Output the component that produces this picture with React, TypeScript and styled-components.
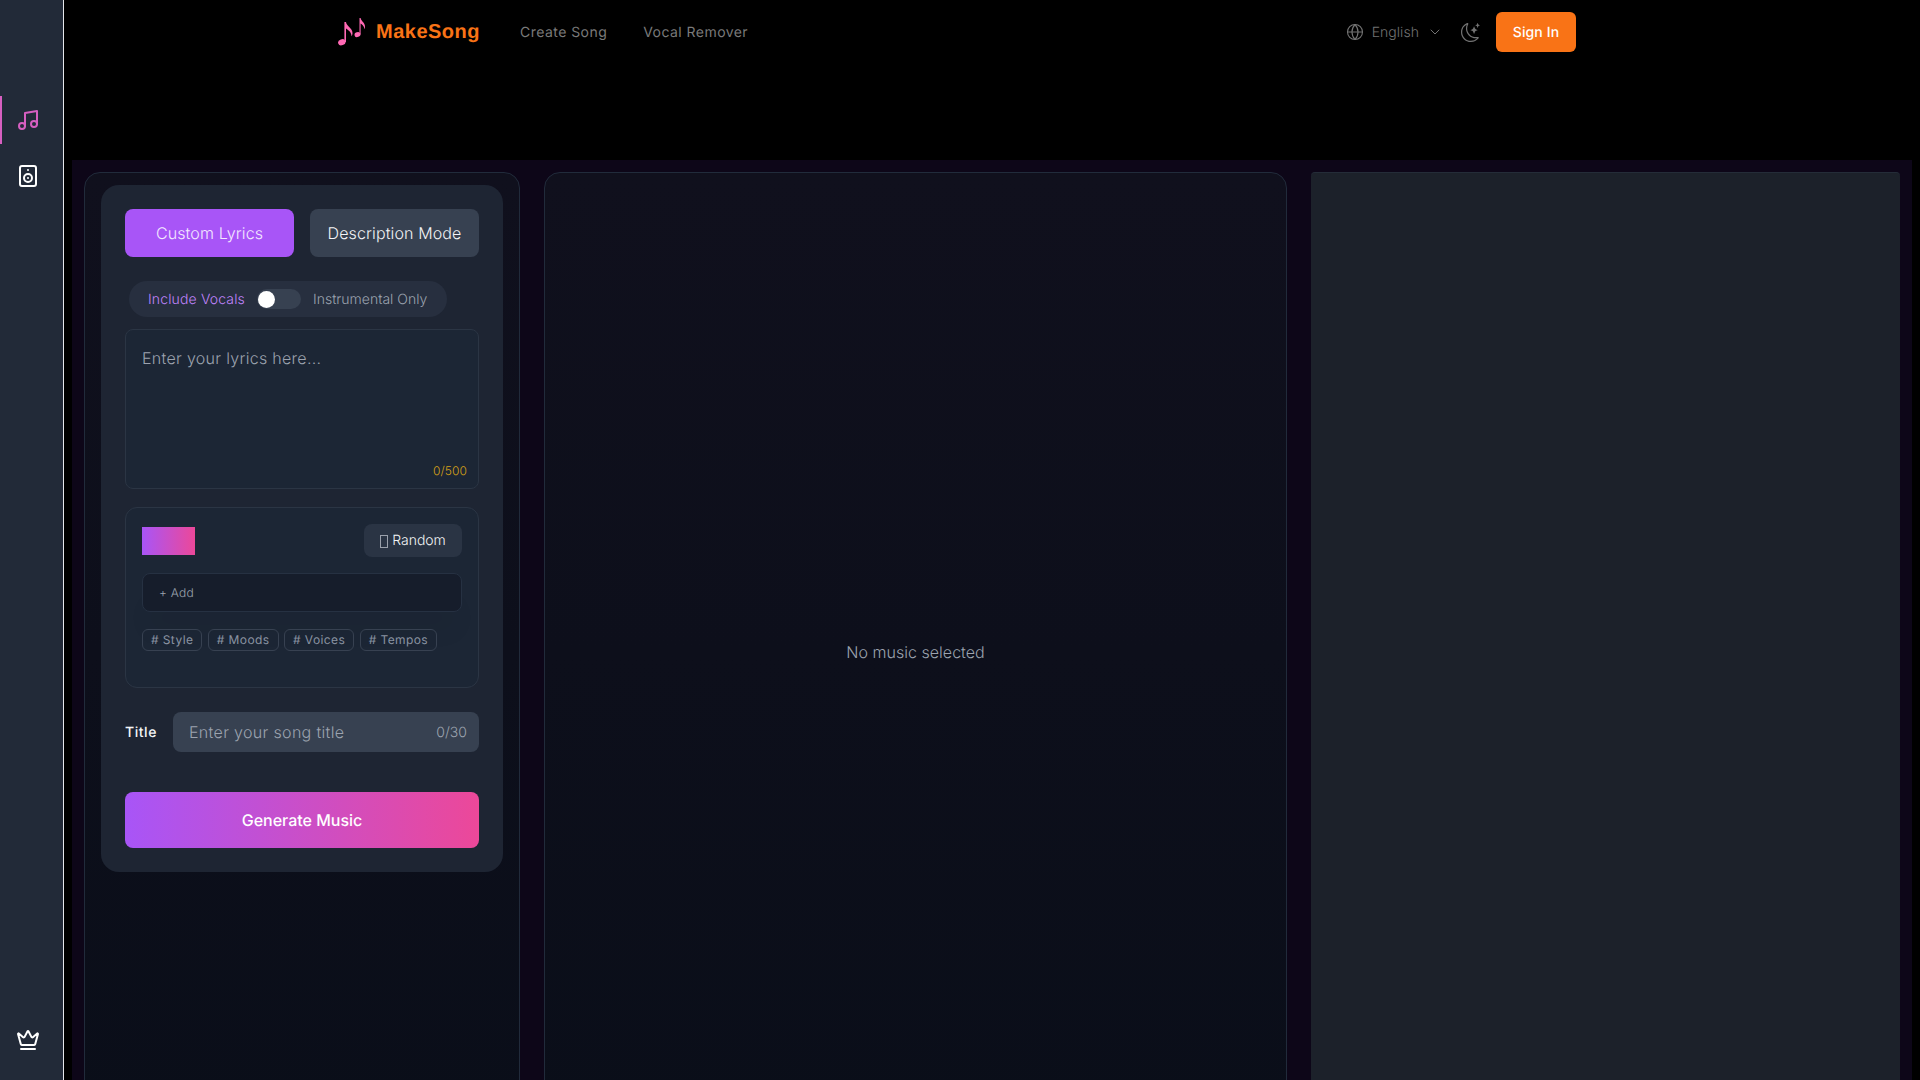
import React from "react";
import styled, { createGlobalStyle } from "styled-components";
import { Music, Speaker, Crown, Globe, ChevronDown } from "lucide-react";
import { BsMoonStars } from "react-icons/bs";

const Global = createGlobalStyle`
  * { box-sizing: border-box; }
  html, body { margin: 0; height: 100%; background: #000; overflow: hidden; }
  body { font-family: Inter, "Liberation Sans", sans-serif; color: #fff; text-rendering: geometricPrecision; }
  ::placeholder { color: #9ca3af; opacity: 1; }
`;

const Shell = styled.div`
  display: flex;
  width: 1920px;
  height: 1080px;
  overflow: hidden;
  background: #000;
`;

const Sidebar = styled.aside`
  flex: none;
  width: 64px;
  height: 1080px;
  background: #222a38;
  border-right: 1px solid #e5e7eb;
  display: flex;
  flex-direction: column;
  padding: 96px 0 8px;
`;

const SideItem = styled.div<{ $active?: boolean }>`
  position: relative;
  height: 48px;
  display: flex;
  align-items: center;
  padding-left: 16px;
  color: ${(p) => (p.$active ? "#d65fc0" : "#fff")};
  margin-bottom: 8px;
  &::before {
    content: "";
    display: ${(p) => (p.$active ? "block" : "none")};
    position: absolute;
    left: 0;
    top: 0;
    bottom: 0;
    width: 2px;
    background: #d65fc0;
  }
`;

const SideSpacer = styled.div`
  flex: 1;
`;

const Content = styled.div`
  flex: 1;
  min-width: 0;
  display: flex;
  flex-direction: column;
`;

const Header = styled.header`
  flex: none;
  height: 160px;
  padding: 12px 0 0 274px;
  width: 1512px;
`;

const HeaderRow = styled.div`
  display: flex;
  align-items: center;
  height: 40px;
`;

const Brand = styled.div`
  display: flex;
  align-items: center;
  gap: 10px;
  margin-right: 40px;
`;

const BrandName = styled.span`
  font-family: "Liberation Sans", Arial, sans-serif;
  font-weight: 700;
  font-size: 20px;
  letter-spacing: 0.5px;
  color: #f97316;
`;

const NavLink = styled.a`
  font-size: 14px;
  font-weight: 400;
  letter-spacing: 0.45px;
  color: #7a7a7a;
  margin-right: 36px;
`;

const HeaderTools = styled.div`
  margin-left: auto;
  display: flex;
  align-items: center;
  color: #737373;
`;

const Lang = styled.div`
  display: flex;
  align-items: center;
  gap: 8px;
  font-size: 14px;
  font-weight: 350;
  letter-spacing: 0.05px;
  margin-right: 18px;
`;

const SignIn = styled.button`
  width: 80px;
  height: 40px;
  margin-left: 16px;
  border: 0;
  border-radius: 6px;
  background: #f97316;
  color: #fff;
  font: 450 14px Inter, sans-serif;
  letter-spacing: 0.1px;
  text-rendering: geometricPrecision;
`;

const Main = styled.main`
  flex: none;
  width: 1840px;
  margin-left: 8px;
  height: 1000px;
  padding: 12px;
  background: #0d0618;
  display: flex;
  gap: 24px;
`;

const Panel = styled.section<{ $w: number }>`
  flex: none;
  width: ${(p) => p.$w}px;
  height: 960px;
  border: 1px solid #212b3b;
  border-radius: 16px;
  background: linear-gradient(180deg, #10101d, #0a0e19);
`;

const LeftPanel = styled(Panel)`
  padding: 12px 16px;
`;

const MiddlePanel = styled(Panel)`
  display: flex;
  align-items: center;
  justify-content: center;
  color: #9ca3af;
  font-size: 16px;
  font-weight: 350;
  letter-spacing: 0.03px;
`;

const RightPanel = styled.section`
  flex: none;
  width: 589px;
  height: 960px;
  background: #1c212a;
  border-top: 1px solid #242c38;
  border-radius: 4px 4px 0 0;
`;

const Card = styled.div`
  width: 402px;
  height: 687px;
  padding: 24px;
  border-radius: 18px;
  background: #1e2533;
`;

const Tabs = styled.div`
  display: grid;
  grid-template-columns: 1fr 1fr;
  gap: 16px;
`;

const Tab = styled.button<{ $active?: boolean }>`
  height: 48px;
  border: 0;
  border-radius: 8px;
  background: ${(p) => (p.$active ? "#a855f7" : "#374151")};
  color: ${(p) => (p.$active ? "#f3e8ff" : "#f3f4f6")};
  font: 350 16px Inter, sans-serif;
  letter-spacing: 0.12px;
  text-rendering: geometricPrecision;
`;

const VocalPill = styled.div`
  display: inline-flex;
  align-items: center;
  height: 36px;
  margin: 24px 0 12px 4px;
  padding: 0 20px 0 19px;
  border-radius: 18px;
  background: #272f3f;
  font-size: 14px;
  font-weight: 350;
  color: #9ca3af;
  vertical-align: top;
`;

const VocalOn = styled.span`
  color: #c084fc;
  letter-spacing: 0.15px;
`;

const VocalOff = styled.span`
  letter-spacing: 0;
`;

const Toggle = styled.span`
  position: relative;
  width: 44px;
  height: 20px;
  margin: 0 12px;
  border-radius: 10px;
  background: #374151;
`;

const Knob = styled.span`
  position: absolute;
  left: 1px;
  top: 1.5px;
  width: 17px;
  height: 17px;
  border-radius: 50%;
  background: #fff;
`;

const LyricsBox = styled.div`
  position: relative;
  height: 160px;
  border: 1px solid #2b3544;
  border-radius: 8px;
  background: #1c2635;
`;

const Lyrics = styled.textarea`
  display: block;
  width: 100%;
  height: 100%;
  padding: 16px;
  border: 0;
  resize: none;
  background: transparent;
  font: 350 16px/24px Inter, sans-serif;
  letter-spacing: 0.3px;
  color: #fff;
  outline: none;
  text-rendering: geometricPrecision;
`;

const LyricsCount = styled.span`
  position: absolute;
  right: 11px;
  bottom: 10px;
  font-size: 12px;
  font-weight: 350;
  letter-spacing: 0.1px;
  color: #d4a017;
`;

const StyleBox = styled.div`
  height: 181px;
  margin-top: 18px;
  padding: 16px;
  border: 1px solid #2b3544;
  border-radius: 12px;
  background: #1c2635;
`;

const StyleTop = styled.div`
  display: flex;
  align-items: center;
  justify-content: space-between;
`;

const Swatch = styled.div`
  width: 53px;
  height: 28px;
  background: linear-gradient(90deg, #a855f7, #ec4899);
`;

const RandomBtn = styled.button`
  height: 33px;
  width: 98px;
  display: flex;
  align-items: center;
  justify-content: center;
  gap: 4px;
  border: 0;
  border-radius: 8px;
  background: #2a3444;
  color: #f3f4f6;
  font: 350 14px Inter, sans-serif;
  text-rendering: geometricPrecision;
`;

const Tofu = styled.span`
  width: 8px;
  height: 13px;
  margin-top: 2px;
  border: 1px solid #9aa0ab;
`;

const AddBox = styled.div`
  height: 39px;
  margin-top: 16px;
  padding: 0 16px 1px;
  display: flex;
  align-items: center;
  border: 1px solid #263142;
  border-radius: 8px;
  background: #161d2b;
  box-shadow: 0 25px 25px -5px rgba(0, 0, 0, 0.04);
  font-size: 12px;
  font-weight: 350;
  letter-spacing: 0.25px;
  color: #9ca3af;
`;

const TagRow = styled.div`
  position: relative;
  display: flex;
  gap: 5.5px;
  margin-top: 17px;
`;

const Tag = styled.span`
  height: 22px;
  padding: 0 8px 1px;
  display: flex;
  align-items: center;
  border: 1px solid #374151;
  border-radius: 6px;
  font-size: 12px;
  letter-spacing: 0.4px;
  color: #8a93a2;
`;

const TitleRow = styled.div`
  display: flex;
  align-items: center;
  margin-top: 24px;
  gap: 16px;
`;

const TitleLabel = styled.label`
  flex: none;
  width: 32px;
  font-size: 14px;
  font-weight: 450;
  letter-spacing: 0.55px;
  color: #f3f4f6;
`;

const TitleField = styled.div`
  position: relative;
  flex: 1;
  height: 40px;
  border-radius: 8px;
  background: #374151;
`;

const TitleInput = styled.input`
  width: 100%;
  height: 100%;
  padding: 0 16px;
  border: 0;
  background: transparent;
  font: 350 16px Inter, sans-serif;
  letter-spacing: 0.33px;
  color: #fff;
  outline: none;
  text-rendering: geometricPrecision;
`;

const TitleCount = styled.span`
  position: absolute;
  right: 12px;
  top: 12px;
  font-size: 14px;
  font-weight: 350;
  color: #9ca3af;
`;

const Generate = styled.button`
  display: block;
  width: 100%;
  height: 56px;
  margin-top: 40px;
  border: 0;
  border-radius: 8px;
  background: linear-gradient(90deg, #a855f7, #ec4899);
  color: #fff;
  font: 450 16px Inter, sans-serif;
  text-rendering: geometricPrecision;
`;

const Logo = () => (
  <svg width="28" height="28" viewBox="0 0 28 28" fill="#ff69b4">
    <ellipse cx="3.800" cy="24.300" rx="3.800" ry="3" transform="rotate(-20 3.800 24.300)" />
    <path d="M6.400 24V4H8C8.400 8 14.500 10 14.500 15C14.500 16.500 14 17.500 13.500 18.300C13.500 14 10 12 8 10.500V24Z" />
    <ellipse cx="19.500" cy="16.600" rx="3" ry="2.400" transform="rotate(-20 19.500 16.600)" />
    <path d="M21.500 16.500V0H22.600C22.900 3 27 4.500 27 8.500C27 9.600 26.700 10.500 26.300 11.200C26.300 8 24 6.500 22.600 5.500V16.500Z" />
  </svg>
);

export default function App() {
  return (
    <Shell>
      <Global />
      <Sidebar>
        <SideItem $active><Music size={24} /></SideItem>
        <SideItem><Speaker size={24} /></SideItem>
        <SideSpacer />
        <SideItem><Crown size={24} /></SideItem>
      </Sidebar>
      <Content>
        <Header>
          <HeaderRow>
            <Brand>
              <Logo />
              <BrandName>MakeSong</BrandName>
            </Brand>
            <NavLink>Create Song</NavLink>
            <NavLink>Vocal Remover</NavLink>
            <HeaderTools>
              <Lang>
                <Globe size={18} strokeWidth={1.5} />
                English
                <ChevronDown size={16} strokeWidth={1.5} />
              </Lang>
              <BsMoonStars size={19} />
              <SignIn>Sign In</SignIn>
            </HeaderTools>
          </HeaderRow>
        </Header>
        <Main>
          <LeftPanel $w={436}>
            <Card>
              <Tabs>
                <Tab $active>Custom Lyrics</Tab>
                <Tab>Description Mode</Tab>
              </Tabs>
              <VocalPill>
                <VocalOn>Include Vocals</VocalOn>
                <Toggle><Knob /></Toggle>
                <VocalOff>Instrumental Only</VocalOff>
              </VocalPill>
              <LyricsBox>
                <Lyrics placeholder="Enter your lyrics here..." />
                <LyricsCount>0/500</LyricsCount>
              </LyricsBox>
              <StyleBox>
                <StyleTop>
                  <Swatch />
                  <RandomBtn><Tofu />Random</RandomBtn>
                </StyleTop>
                <AddBox>+ Add</AddBox>
                <TagRow>
                  <Tag># Style</Tag>
                  <Tag># Moods</Tag>
                  <Tag># Voices</Tag>
                  <Tag># Tempos</Tag>
                </TagRow>
              </StyleBox>
              <TitleRow>
                <TitleLabel>Title</TitleLabel>
                <TitleField>
                  <TitleInput placeholder="Enter your song title" />
                  <TitleCount>0/30</TitleCount>
                </TitleField>
              </TitleRow>
              <Generate>Generate Music</Generate>
            </Card>
          </LeftPanel>
          <MiddlePanel $w={743}>No music selected</MiddlePanel>
          <RightPanel />
        </Main>
      </Content>
    </Shell>
  );
}
